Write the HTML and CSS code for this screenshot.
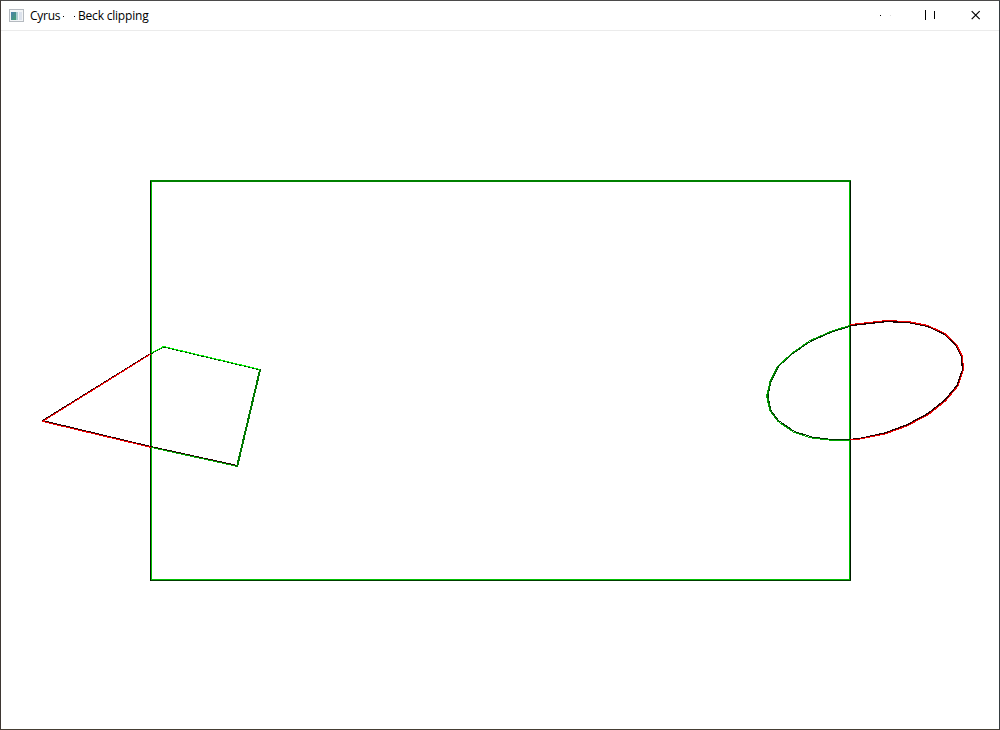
FILE: index.html
```html
<!DOCTYPE html>
<html lang="en">
<head>
<meta charset="utf-8">
<title>Cyrus-Beck clipping</title>
<link rel="stylesheet" href="styles.css">
</head>
<body>
<div class="window">
  <header class="titlebar">
    <svg class="app-icon" width="16" height="14" viewBox="0 0 16 14">
      <defs><linearGradient id="screen" x1="0" y1="0" x2="1" y2="1"><stop offset="0" stop-color="#4b7fae"/><stop offset="1" stop-color="#43a070"/></linearGradient></defs>
      <rect x=".5" y=".5" width="14" height="12" fill="#f3f5f7" stroke="#b5bac0"/>
      <rect x="2" y="3" width="5" height="8" fill="url(#screen)"/>
      <path d="M7 3h2v8H7z" fill="#a9cbd0"/><path d="M10 3h3v8h-3z" fill="#dce2ec"/>
    </svg>
    <div class="title"><span class="word first">Cyrus</span><svg class="dash" width="17" height="3" shape-rendering="crispEdges"><path d="M2 2h1v1H2zM13 2h1v1h-1z"/></svg><span class="word second">Beck clipping</span></div>
    <div class="controls">
      <svg width="46" height="29" shape-rendering="crispEdges"><path d="M19 14h1v1h-1z" fill="#000"/><path d="M29 14h1v1h-1z" fill="#ddd"/></svg>
      <svg width="46" height="29" shape-rendering="crispEdges"><path d="M18 9h1v10h-1zM27 10h1v8h-1z"/></svg>
      <svg width="46" height="29"><path d="M18.7 10.2l8 8M26.7 10.2l-8 8" fill="none" stroke="#000" stroke-width="1.2"/></svg>
    </div>
  </header>
  <svg class="canvas" width="998" height="698" viewBox="1 31 998 698" shape-rendering="crispEdges">
    <path fill="#008000" d="M150 180h701v2H150z"/>
    <path fill="#001800" d="M150 181h1v400h-1zM850 181h1v400h-1z"/>
    <path fill="#003c00" d="M151 580h700v1H151z"/>
    <path fill="#00c000" d="M151 182h1v398h-1zM849 182h1v398h-1zM152 579h697v1H152z"/>
    <g class="shape">
      <path class="under" d="M150.5 353.5L42.5 420.5L151 446.5L237.5 465.5"/>
      <path class="out" d="M151.5 353.5L42.5 421.5L151.5 447.5"/>
      <path class="dark-in" d="M151.5 353.5L163.5 347L260.5 370"/>
      <path class="in" d="M151.5 353L163.5 346.5L260.5 369.5"/>
      <path class="mid" d="M151.5 447.5L237.5 466.5"/>
      <path class="side" d="M260 370L237 467"/>
    </g>
    <g class="shape">
      <path class="under-in" d="M850 326.5L833 331.5L810.5 341.5L792 354L778.5 366.5L771 381.5L768 396L771 410.5L778.5 420.5L794.5 431.5L812 437L836.5 440L850 439"/>
      <path class="mid" d="M850 325.5L833 330.5L810 340.5L791.5 353.5L777.5 366.5L770 381.5L766.5 396L770 411L778 421.5L794 432.5L811.5 438L836.5 440.9L850 440"/>
      <path class="side thin" d="M778 366.5L770.5 381.5L767.5 396L770.5 411L778 421"/>
      <path class="under wide" d="M850 325.5L860 324.5L886.5 321.5L908 322.5L928 326.5L945 334.5L955.5 344.5L961.5 356.5L962.5 370L957 385.5L945 400L928 413.5L906.5 425L885 433L860 438.5L850 439.5"/>
      <path class="out" d="M850 324.5L860 323.5L886.5 320.5L908 321.5L928 325.5L945 333.5L956.5 344.5L962.5 356.5L963.5 370L958 386L946 400.5L928.5 414.5L907 426L885 434L860 439L850 440"/>
    </g>
  </svg>
</div>
</body>
</html>
```
FILE: styles.css
```css
body { margin: 0; background: #fff; }
.window {
  box-sizing: border-box;
  width: 1000px;
  height: 730px;
  border: 1px solid;
  border-color: #4b4a4a #343c40 #453e34 #3e3733;
  background: #fff;
  overflow: hidden;
}
.titlebar {
  box-sizing: border-box;
  display: flex;
  height: 30px;
  border-bottom: 1px solid #ebebeb;
}
.app-icon { margin: 8px 5px 0 8px; flex: none; }
.title {
  display: flex;
  align-items: center;
  height: 29px;
  font: 12px/16px "Open Sans", "Noto Sans", sans-serif;
  color: #000;
  white-space: nowrap;
}
.word { display: block; }
.first { width: 31px; letter-spacing: -0.25px; }
.dash { width: 17px; flex: none; }
.second { letter-spacing: -0.2px; }
.controls { display: flex; margin-left: auto; }
.canvas { display: block; }
.shape path { fill: none; stroke-width: 1; }
.shape .under { stroke: #200000; }
.shape .wide { stroke-width: 1.4; }
.shape .under-in { stroke: #003000; }
.shape .out { stroke: #f00000; }
.shape .dark-in { stroke: #003000; }
.shape .in { stroke: #00f000; }
.shape .mid { stroke: #00a800; }
.shape .side { stroke: #007800; stroke-width: 2; }
.shape .thin { stroke-width: 1.3; }
```
